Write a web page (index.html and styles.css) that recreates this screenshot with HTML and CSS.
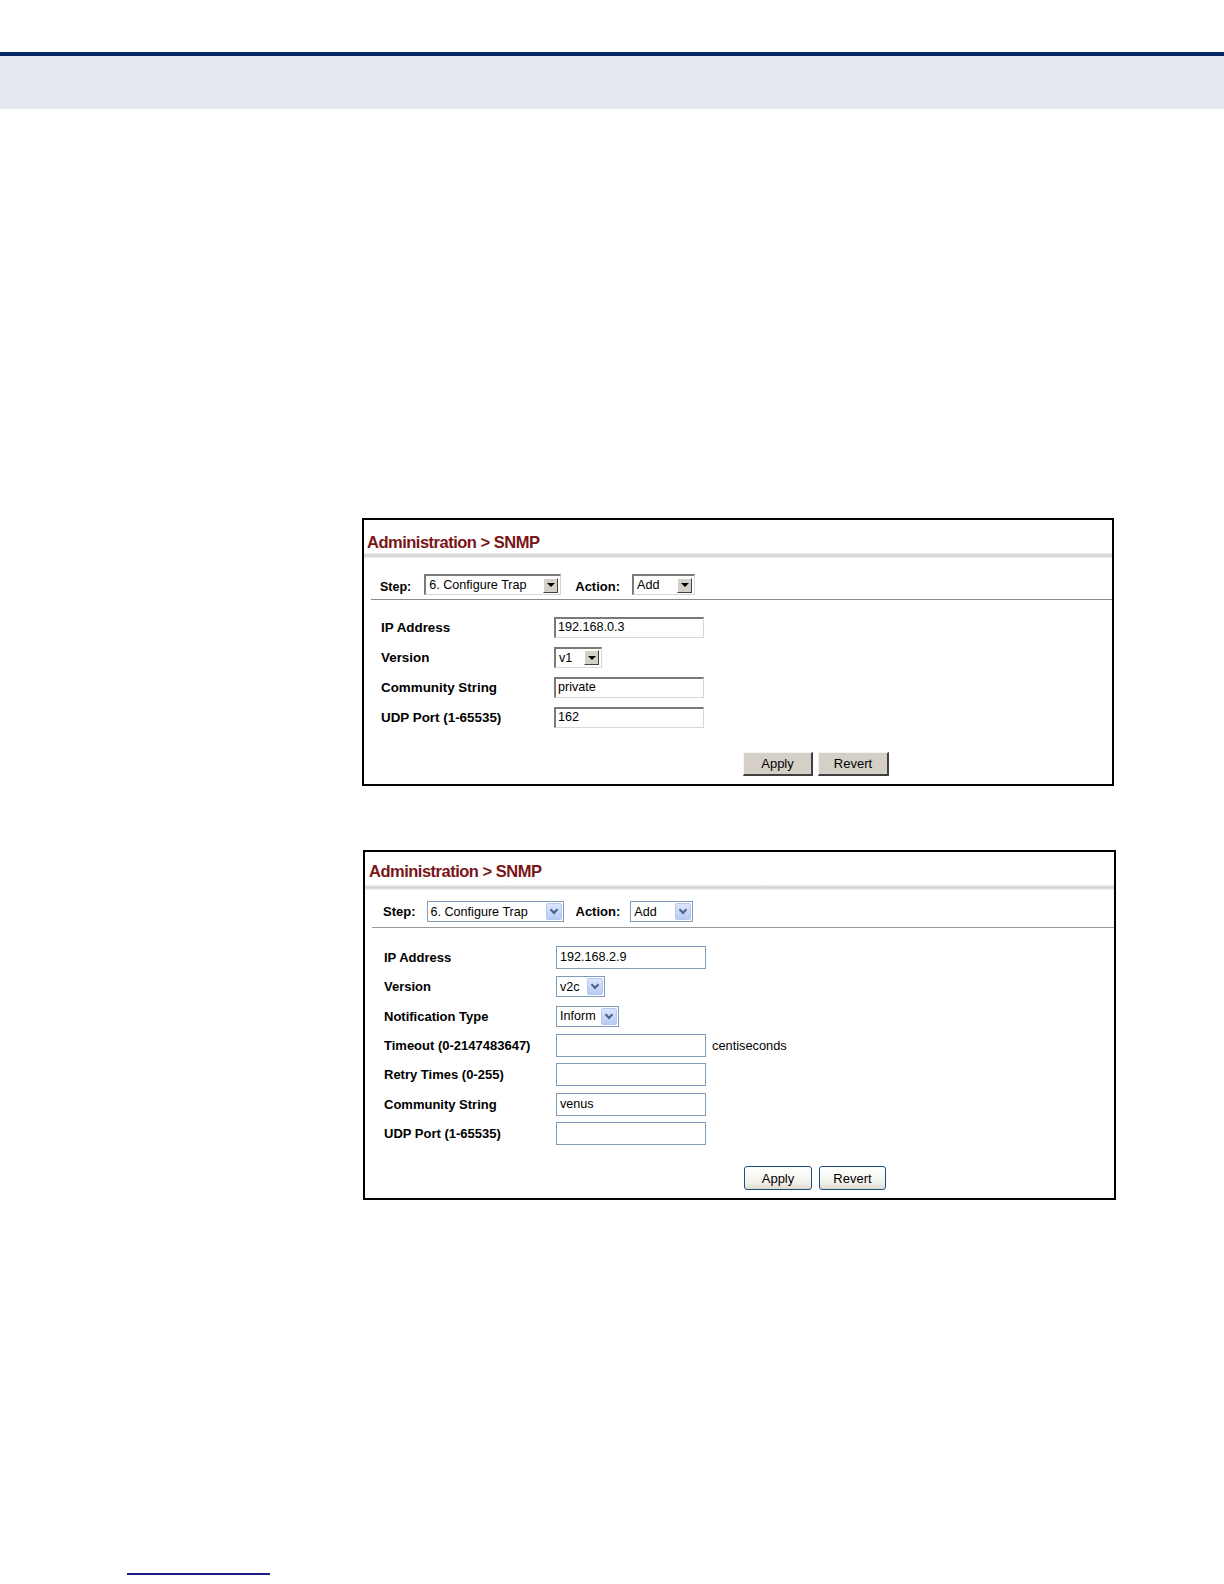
FILE: index.html
```html
<!DOCTYPE html>
<html>
<head>
<meta charset="utf-8">
<link rel="stylesheet" href="styles.css">
</head>
<body>
<div class="topline"></div>
<div class="band"></div>

<div class="panel p1">
  <div class="title">Administration &gt; SNMP</div>
  <div class="tsep"></div>
  <div class="steprow">
    <span class="slabel">Step:</span>
    <div class="sel c w-step"><span class="val">6. Configure Trap</span><span class="btn"><i></i></span></div>
    <span class="slabel act">Action:</span>
    <div class="sel c w-add"><span class="val">Add</span><span class="btn"><i></i></span></div>
  </div>
  <div class="line"></div>
  <div class="form">
    <div class="row"><span class="lab">IP Address</span><div class="inp c">192.168.0.3</div></div>
    <div class="row"><span class="lab">Version</span><div class="sel c w-v1"><span class="val">v1</span><span class="btn"><i></i></span></div></div>
    <div class="row"><span class="lab">Community String</span><div class="inp c">private</div></div>
    <div class="row"><span class="lab">UDP Port (1-65535)</span><div class="inp c">162</div></div>
  </div>
  <div class="buttons">
    <span class="b c apply">Apply</span>
    <span class="b c revert">Revert</span>
  </div>
</div>

<div class="panel p2">
  <div class="title">Administration &gt; SNMP</div>
  <div class="tsep"></div>
  <div class="steprow">
    <span class="slabel">Step:</span>
    <div class="sel x w-step"><span class="val">6. Configure Trap</span><span class="btn"><i></i></span></div>
    <span class="slabel act">Action:</span>
    <div class="sel x w-add"><span class="val">Add</span><span class="btn"><i></i></span></div>
  </div>
  <div class="line"></div>
  <div class="form">
    <div class="row"><span class="lab">IP Address</span><div class="inp x">192.168.2.9</div></div>
    <div class="row"><span class="lab">Version</span><div class="sel x w-v2c"><span class="val">v2c</span><span class="btn"><i></i></span></div></div>
    <div class="row"><span class="lab">Notification Type</span><div class="sel x w-inf"><span class="val">Inform</span><span class="btn"><i></i></span></div></div>
    <div class="row"><span class="lab">Timeout (0-2147483647)</span><div class="inp x"></div><span class="unit">centiseconds</span></div>
    <div class="row"><span class="lab">Retry Times (0-255)</span><div class="inp x"></div></div>
    <div class="row"><span class="lab">Community String</span><div class="inp x">venus</div></div>
    <div class="row"><span class="lab">UDP Port (1-65535)</span><div class="inp x"></div></div>
  </div>
  <div class="buttons">
    <span class="b x apply">Apply</span>
    <span class="b x revert">Revert</span>
  </div>
</div>

<div class="footline"></div>
</body>
</html>
```

FILE: styles.css
```css
html, body {
  margin: 0;
  padding: 0;
  background: #ffffff;
  font-family: "Liberation Sans", Arial, sans-serif;
  color: #000;
}
.topline {
  margin-top: 52px;
  height: 4px;
  background: #082862;
}
.band {
  height: 53px;
  background: #e6e9f0;
}
.panel {
  border: 2px solid #000;
  box-sizing: border-box;
  background: #fff;
}
.p1 {
  margin: 409px 0 0 362px;
  width: 752px;
  height: 268px;
}
.p2 {
  margin: 64px 0 0 363px;
  width: 753px;
  height: 350px;
}
.title {
  height: 33px;
  padding: 11px 0 0 3px;
  box-sizing: border-box;
  line-height: 22px;
  color: #7a1518;
  font-size: 16.5px;
  font-weight: bold;
  letter-spacing: -0.5px;
}
.p2 .title { padding: 6px 0 0 4px; line-height: 27px; }
.tsep {
  height: 5px;
  background: linear-gradient(to bottom, #f0f0f0, #d4d4d4 50%, #eeeeee);
}
.steprow {
  height: 41px;
  display: flex;
  align-items: flex-end;
  padding: 0 0 4px 16px;
  box-sizing: border-box;
  font-size: 12.5px;
}
.p2 .steprow { height: 37px; padding-bottom: 5px; padding-left: 18px; }
.slabel {
  font-weight: bold;
  line-height: 20px;
  margin-right: 13px;
  position: relative;
  top: 2px;
}
.p2 .slabel { top: 0; margin-right: 11px; font-size: 13px; }
.slabel.act { margin-left: 14px; margin-right: 12px; font-size: 13px; }
.p2 .slabel.act { margin-left: 12px; margin-right: 10px; }
.line {
  height: 1px;
  background: #8a8a8a;
  margin-left: 7px;
}
.p2 .line { margin-left: 7px; background: #9a9a9a; }
.form { padding: 12px 0 0 17px; }
.p2 .form { padding: 15px 0 0 19px; }
.row {
  height: 30px;
  display: flex;
  align-items: center;
}
.p2 .row { height: 29.33px; }
.lab {
  width: 173px;
  font-size: 13.4px;
  font-weight: bold;
  flex: none;
}
.p2 .lab { width: 172px; font-size: 13px; }
.inp {
  box-sizing: border-box;
  width: 150px;
  height: 21px;
  font-size: 12.6px;
  line-height: 17px;
  padding-left: 2px;
  white-space: nowrap;
}
.inp.c {
  border-top: 2px solid #7a7a7a;
  border-left: 2px solid #7a7a7a;
  border-right: 1px solid #d8d8d8;
  border-bottom: 1px solid #d8d8d8;
}
.inp.x {
  height: 23px;
  width: 150px;
  border: 1px solid #7f9db9;
  line-height: 21px;
  padding-left: 3px;
}
.unit { font-size: 12.8px; margin-left: 6px; }

.sel {
  box-sizing: border-box;
  height: 21px;
  display: flex;
  align-items: center;
  font-size: 12.6px;
  background: #fff;
}
.sel .val { flex: 1; padding-left: 3px; white-space: nowrap; }
.sel.c {
  border-top: 2px solid #7a7a7a;
  border-left: 2px solid #7a7a7a;
  border-right: 1px solid #d8d8d8;
  border-bottom: 1px solid #d8d8d8;
}
.sel.c .btn {
  width: 15px;
  height: 15px;
  margin-right: 2px;
  box-sizing: border-box;
  background: #d4d0c8;
  border-top: 1px solid #fff;
  border-left: 1px solid #fff;
  border-right: 1px solid #404040;
  border-bottom: 1px solid #404040;
  display: flex;
  align-items: center;
  justify-content: center;
}
.sel.c .btn i {
  width: 0; height: 0;
  border-left: 4px solid transparent;
  border-right: 4px solid transparent;
  border-top: 4px solid #000;
}
.sel.x { border: 1px solid #7f9db9; }
.sel.x .btn {
  width: 16px;
  height: 17px;
  margin-right: 1px;
  box-sizing: border-box;
  border: 1px solid #b4c8f0;
  border-radius: 2px;
  background: linear-gradient(to bottom, #dce6fc, #b6cbf7);
  display: flex;
  align-items: center;
  justify-content: center;
}
.sel.x .btn i {
  width: 4px; height: 4px;
  border-right: 2px solid #4d6185;
  border-bottom: 2px solid #4d6185;
  transform: rotate(45deg);
  margin-top: -3px;
}
.w-step { width: 137px; }
.w-add { width: 63px; }
.w-v1 { width: 48px; }
.w-v2c { width: 49px; }
.w-inf { width: 63px; }

.buttons {
  display: flex;
  padding-left: 379px;
  margin-top: 20px;
}
.p2 .buttons { padding-left: 379px; margin-top: 18px; }
.b {
  box-sizing: border-box;
  height: 24px;
  display: flex;
  align-items: center;
  justify-content: center;
  font-size: 13px;
}
.b.c {
  background: #d4d0c8;
  border-top: 1px solid #f4f4f4;
  border-left: 1px solid #f4f4f4;
  border-right: 2px solid #404040;
  border-bottom: 2px solid #404040;
}
.b.c.apply { width: 70px; margin-right: 5px; }
.b.c.revert { width: 71px; }
.b.x {
  border: 1px solid #1c4f86;
  border-radius: 3px;
  background: linear-gradient(to bottom, #ffffff, #f2f1ea 70%, #dcd9cc);
}
.b.x.apply { width: 68px; margin-right: 7px; }
.b.x.revert { width: 67px; }

.footline {
  margin: 373px 0 0 127px;
  width: 143px;
  height: 2px;
  background: #1c1c86;
}
```
